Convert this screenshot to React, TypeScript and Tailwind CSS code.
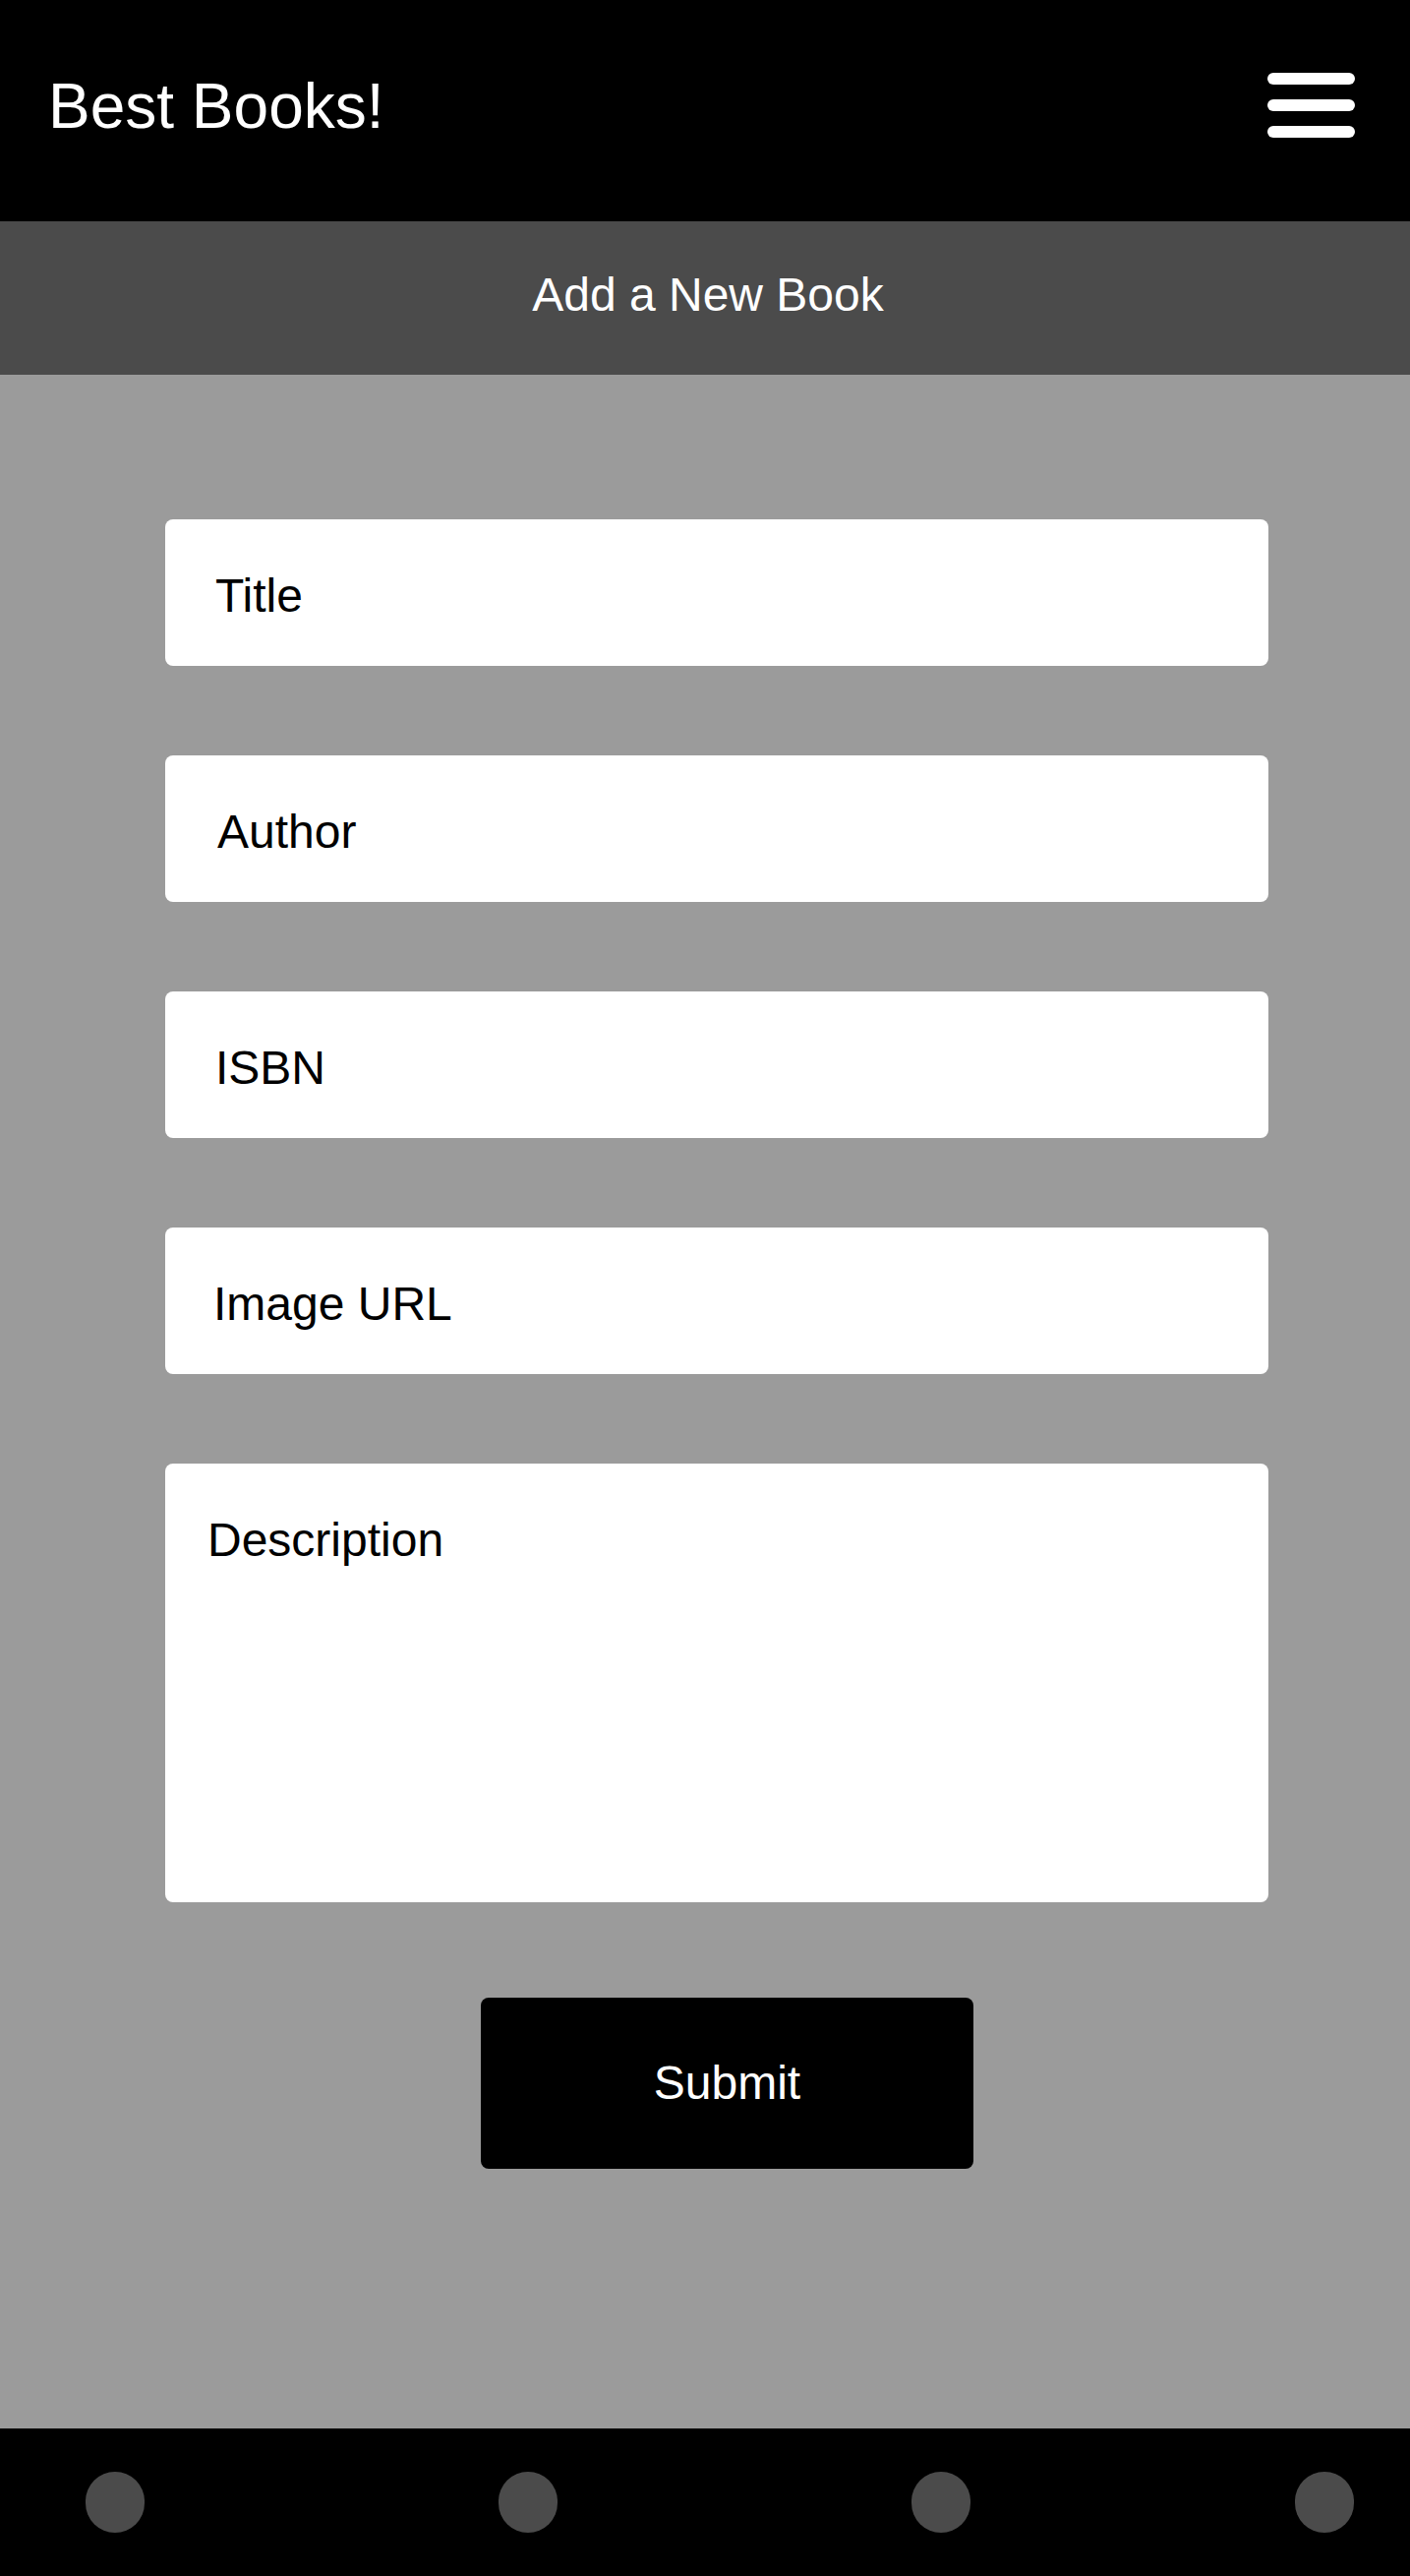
import { useState } from "react";

const fields = [
  { name: "title", label: "Title", pad: "pl-[51px]" },
  { name: "author", label: "Author", pad: "pl-[53px]" },
  { name: "isbn", label: "ISBN", pad: "pl-[51px]" },
  { name: "image", label: "Image URL", pad: "pl-[49px]" },
];

export default function App() {
  const [values, setValues] = useState<Record<string, string>>({});

  const update = (key: string, v: string) => setValues((prev) => ({ ...prev, [key]: v }));

  return (
    <div className="w-[1434px] font-['Liberation_Sans',Arial,sans-serif]">
      {/* top bar */}
      <header className="flex h-[225px] items-center justify-between bg-black pb-[12px] pl-[49px] pr-[56px]">
        <h1 className="mt-[3px] text-[64px] leading-none text-white">Best Books!</h1>
        <button className="flex flex-col gap-[15px]" aria-label="Menu">
          <span className="block h-[12px] w-[89px] rounded-full bg-white" />
          <span className="block h-[12px] w-[89px] rounded-full bg-white" />
          <span className="block h-[12px] w-[89px] rounded-full bg-white" />
        </button>
      </header>

      <div className="flex h-[156px] items-center justify-center bg-[#4b4b4b] pb-[6px] pl-[6px]">
        <h2 className="text-[48px] leading-none text-white">Add a New Book</h2>
      </div>

      <main className="h-[2088px] bg-[#9b9b9b] pl-[168px] pr-[144px] pt-[147px]">
        <form className="flex flex-col" onSubmit={(e) => e.preventDefault()}>
          <div className="flex flex-col gap-[91px]">
            {fields.map((f) => (
              <input
                key={f.name}
                value={values[f.name] ?? ""}
                onChange={(e) => update(f.name, e.target.value)}
                placeholder={f.label}
                className={`h-[149px] w-full rounded-lg bg-white ${f.pad} pr-6 pt-[6px] text-[48px] text-black outline-none placeholder:text-black`}
              />
            ))}
            <textarea
              value={values.description ?? ""}
              onChange={(e) => update("description", e.target.value)}
              placeholder="Description"
              className="h-[446px] w-full resize-none rounded-lg bg-white pl-[43px] pr-6 pt-[50px] text-[48px] leading-[55px] text-black outline-none placeholder:text-black"
            />
          </div>
          <button
            type="submit"
            className="ml-[321px] mt-[97px] h-[174px] w-[501px] rounded-lg bg-black text-[48px] text-white"
          >
            Submit
          </button>
        </form>
      </main>

      <footer className="flex h-[150px] items-center bg-black">
        <span className="ml-[87px] h-[62px] w-[60px] rounded-full bg-[#4b4b4b]" />
        <span className="ml-[360px] h-[62px] w-[60px] rounded-full bg-[#4b4b4b]" />
        <span className="ml-[360px] h-[62px] w-[60px] rounded-full bg-[#4b4b4b]" />
        <span className="ml-[330px] h-[62px] w-[60px] rounded-full bg-[#4b4b4b]" />
      </footer>
    </div>
  );
}
